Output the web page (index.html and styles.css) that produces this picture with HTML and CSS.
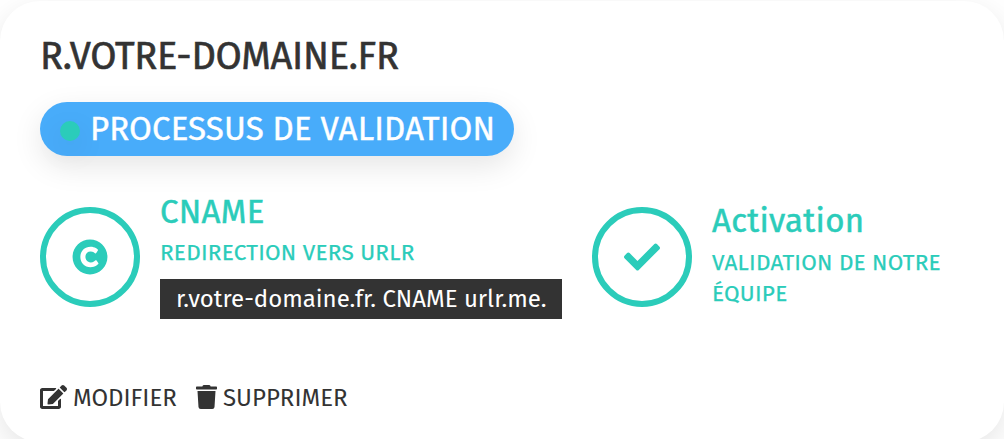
FILE: index.html
```
<!DOCTYPE html>
<html lang="fr">
<head>
<meta charset="utf-8">
<title>Domaine</title>
<link rel="stylesheet" href="styles.css">
</head>
<body>
<main class="card">
  <h1 class="title">R.VOTRE-DOMAINE.FR</h1>
  <div class="badge"><span class="dot"></span><span class="badge-text">PROCESSUS DE VALIDATION</span></div>
  <div class="steps">
    <section class="step step-cname">
      <div class="ring">
        <svg class="icon-c" viewBox="0 0 512 512"><path fill="currentColor" d="M256 8C119.033 8 8 119.033 8 256s111.033 248 248 248 248-111.033 248-248S392.967 8 256 8zm117.134 346.753c-1.592 1.867-39.776 45.731-109.851 45.731-84.692 0-144.484-63.26-144.484-145.567 0-81.303 62.004-143.401 143.762-143.401 66.957 0 101.965 37.315 103.422 38.904a12 12 0 0 1 1.238 14.623l-22.38 34.655c-4.049 6.267-12.774 7.351-18.234 2.295-.233-.214-26.529-23.88-61.88-23.88-46.116 0-73.916 33.575-73.916 76.082 0 39.602 25.514 79.692 74.277 79.692 38.697 0 65.28-28.338 65.544-28.625 5.132-5.565 14.059-5.033 18.508 1.053l24.547 33.572a12.001 12.001 0 0 1-.553 14.866z"/></svg>
      </div>
      <div class="info info-cname">
        <h2 class="name name-cname">CNAME</h2>
        <p class="sub sub-cname">REDIRECTION VERS URLR</p>
        <code class="record"><span class="record-text">r.votre-domaine.fr. CNAME urlr.me.</span></code>
      </div>
    </section>
    <section class="step">
      <div class="ring">
        <svg class="icon-check" viewBox="0 0 512 512"><path fill="currentColor" d="M173.898 439.404l-166.4-166.4c-9.997-9.997-9.997-26.206 0-36.204l36.203-36.204c9.997-9.998 26.207-9.998 36.204 0L192 312.69 432.095 72.596c9.997-9.997 26.207-9.997 36.204 0l36.203 36.204c9.997 9.997 9.997 26.206 0 36.204l-294.4 294.401c-9.998 9.997-26.207 9.997-36.204-.001z"/></svg>
      </div>
      <div class="info info-act">
        <h2 class="name name-act">Activation</h2>
        <p class="sub sub-act">VALIDATION DE NOTRE<br>ÉQUIPE</p>
      </div>
    </section>
  </div>
  <div class="actions">
    <a class="action"><svg class="icon-edit" viewBox="0 0 576 512"><path fill="currentColor" d="M402.6 83.2l90.2 90.2c3.8 3.8 3.8 10 0 13.8L274.4 405.6l-92.8 10.3c-12.4 1.4-22.9-9.1-21.5-21.5l10.3-92.8L388.8 83.2c3.8-3.8 10-3.8 13.8 0zm162-22.9l-48.8-48.8c-15.2-15.2-39.9-15.2-55.2 0l-35.4 35.4c-3.8 3.8-3.8 10 0 13.8l90.2 90.2c3.8 3.8 10 3.8 13.8 0l35.4-35.4c15.2-15.3 15.2-40 0-55.2zM384 346.2V448H64V128h229.8c3.2 0 6.2-1.3 8.5-3.5l40-40c7.6-7.6 2.2-20.5-8.5-20.5H48C21.500 64 0 85.500 0 112v352c0 26.500 21.500 48 48 48h352c26.500 0 48-21.500 48-48V306.200c0-10.700-12.900-16-20.500-8.500l-40 40c-2.200 2.300-3.500 5.300-3.500 8.500z"/></svg><span class="act-edit">MODIFIER</span></a>
    <a class="action"><svg class="icon-trash" viewBox="0 0 448 512"><path fill="currentColor" d="M432 32H312l-9.400-18.700A24 24 0 0 0 281.100 0H166.800a23.720 23.720 0 0 0-21.400 13.300L136 32H16A16 16 0 0 0 0 48v32a16 16 0 0 0 16 16h416a16 16 0 0 0 16-16V48a16 16 0 0 0-16-16zM53.200 467a48 48 0 0 0 47.900 45h245.800a48 48 0 0 0 47.900-45L416 128H32z"/></svg><span class="act-del">SUPPRIMER</span></a>
  </div>
</main>
</body>
</html>
```
FILE: styles.css
```
* { box-sizing: border-box; }
html, body { height: 100%; }
body { margin: 0; padding-top: 1px; overflow: hidden; background: #fff; color: #333; font-family: "Fira Sans", "Noto Sans", "Open Sans", sans-serif; }
h1, h2, p { margin: 0; white-space: nowrap; }
svg { display: block; flex: none; }
.card { height: 441px; padding: 31px 40px 0; border-radius: 40px; background: #fff; box-shadow: 0 10px 30px rgba(0,0,0,.1); }
.title { height: 48px; line-height: 48px; font-size: 38px; font-weight: 400; letter-spacing: -.28px; -webkit-text-stroke: .6px; }
.badge { display: flex; align-items: center; width: 474px; height: 54px; margin-top: 22px; padding-left: 20px; border-radius: 27px; background: #48acfa; color: #fff; font-size: 33px; font-weight: 400; letter-spacing: .12px; line-height: 54px; white-space: nowrap; box-shadow: 0 10px 30px rgba(0,0,0,.1); -webkit-text-stroke: .4px; }
.dot { flex: none; width: 20px; height: 20px; margin: 4px 10px 0 0; border-radius: 50%; background: #2bccba; box-shadow: 0 10px 30px rgba(0,0,0,.1); }
.steps { display: flex; height: 202px; color: #2bccba; }
.step { display: flex; align-items: center; gap: 20px; }
.step-cname { width: 522px; margin-right: 30px; }
.ring { display: flex; flex: none; align-items: center; justify-content: center; width: 100px; height: 100px; border: 6px solid; border-radius: 50%; }
.icon-c { width: 36px; height: 36px; }
.icon-check { width: 36px; height: 36px; }
.info-cname { padding-bottom: 4px; }
.info-act { padding-bottom: 5px; }
.name { height: 44px; line-height: 42px; font-size: 33px; font-weight: 400; letter-spacing: .3px; -webkit-text-stroke: .5px; }
.sub { font-size: 22.5px; font-weight: 400; letter-spacing: .25px; line-height: 31px; -webkit-text-stroke: .25px; }
.name-act { height: 47px; }
.sub-cname { padding-top: 2px; }
.record { display: flex; align-items: center; width: 402px; height: 40px; margin-top: 11px; padding-left: 16px; background: #333; color: #fff; font: 24px/40px "Fira Sans", "Noto Sans", "Open Sans", sans-serif; white-space: nowrap; }
.actions { display: flex; height: 32px; margin-top: 24px; font-size: 24px; line-height: 32px; white-space: nowrap; }
.action { display: flex; align-items: center; }
.icon-edit { width: 27px; height: 24px; margin: 0 6px 2px 0; }
.icon-trash { width: 21px; height: 24px; margin: 0 6px 2px 0; }
.act-edit { width: 123px; }
```
